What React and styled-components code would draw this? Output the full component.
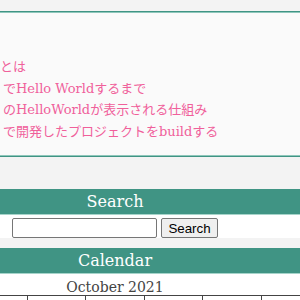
import React from "react";
import styled, { createGlobalStyle } from "styled-components";

const Global = createGlobalStyle`
  html, body { margin: 0; padding: 0; }
  body {
    background: #f3f3f3;
    overflow: hidden;
    font-family: "DejaVu Serif", "Noto Sans CJK JP", serif;
  }
`;

const Page = styled.div`
  width: 410px;
  margin-left: -90px;
`;

const TopBar = styled.div`
  height: 11px;
  background: #f3f3f3;
`;

const ArticleBox = styled.section`
  background: #fafafa;
  border-top: 1px solid #409484;
  border-bottom: 1px solid #409484;
  box-shadow: inset 0 1px 0 #8fc7bb, inset 0 -1px 0 #8fc7bb;
  padding: 44px 0 16px 92px;
  height: 84px;
`;

const LinkList = styled.ul`
  list-style: none;
  margin: 0;
  padding: 0;
`;

const LinkItem = styled.li`
  font-size: 13px;
  line-height: 21.5px;
  color: #f0609a;
  white-space: nowrap;
  margin-left: ${(p) => p.$shift || 0}px;
`;

const Widget = styled.section`
  margin-top: ${(p) => p.$gap}px;
`;

const WidgetTitle = styled.h2`
  margin: 0;
  height: 25px;
  background: #409484;
  border-bottom: 1px solid #a6d4ca;
  color: #ffffff;
  font-size: 16px;
  font-weight: normal;
  line-height: 26px;
  text-align: center;
`;

const SearchForm = styled.form`
  display: flex;
  justify-content: center;
  align-items: flex-start;
  gap: 4px;
  height: 20px;
  padding-top: 3px;
  background: #ffffff;
`;

const SearchInput = styled.input`
  box-sizing: border-box;
  width: 145px;
  height: 20px;
  margin: 0;
  border: 1px solid #767676;
  border-radius: 2px;
  background: #fff;
  padding: 1px 2px;
`;

const SearchButton = styled.button`
  box-sizing: border-box;
  width: 57px;
  height: 20px;
  margin: 0;
  padding: 0;
  border: 1px solid #767676;
  border-radius: 2px;
  background: #efefef;
  color: #000;
  font-family: "Liberation Sans", Arial, sans-serif;
  font-size: 13.33px;
`;

const CalendarBody = styled.div`
  background: #ffffff;
  height: 40px;
`;

const CalTable = styled.table`
  width: 100%;
  table-layout: fixed;
  border-collapse: collapse;
`;

const Caption = styled.caption`
  padding-top: 5px;
  line-height: 16px;
  font-size: 14px;
  color: #444;
  text-align: center;
`;

const Th = styled.th`
  border: 1px solid #444;
  font-size: 12px;
  font-weight: normal;
  color: #444;
  height: 20px;
`;

const Td = styled.td`
  border: 1px solid #444;
  font-size: 12px;
  color: #444;
  text-align: center;
  height: 20px;
`;

const links = [
  { text: "とは", shift: -2 },
  { text: "でHello Worldするまで", shift: 1 },
  { text: "のHelloWorldが表示される仕組み", shift: 1 },
  { text: "で開発したプロジェクトをbuildする", shift: 1 },
];

const days = ["日", "月", "火", "水", "木", "金", "土"];
const weeks = [
  ["", "", "", "", "", "1", "2"],
  ["3", "4", "5", "6", "7", "8", "9"],
  ["10", "11", "12", "13", "14", "15", "16"],
];

export default function App() {
  return (
    <>
      <Global />
      <Page>
        <TopBar />
        <ArticleBox>
          <LinkList>
            {links.map((l) => (
              <LinkItem key={l.text} $shift={l.shift}>
                {l.text}
              </LinkItem>
            ))}
          </LinkList>
        </ArticleBox>
        <Widget $gap={32}>
          <WidgetTitle>Search</WidgetTitle>
          <SearchForm onSubmit={(e) => e.preventDefault()}>
            <SearchInput type="text" />
            <SearchButton type="submit">Search</SearchButton>
          </SearchForm>
        </Widget>
        <Widget $gap={10}>
          <WidgetTitle>Calendar</WidgetTitle>
          <CalendarBody>
            <CalTable>
              <Caption>October 2021</Caption>
              <thead>
                <tr>
                  {days.map((d) => (
                    <Th key={d}>{d}</Th>
                  ))}
                </tr>
              </thead>
              <tbody>
                {weeks.map((w, i) => (
                  <tr key={i}>
                    {w.map((d, j) => (
                      <Td key={j}>{d}</Td>
                    ))}
                  </tr>
                ))}
              </tbody>
            </CalTable>
          </CalendarBody>
        </Widget>
      </Page>
    </>
  );
}
